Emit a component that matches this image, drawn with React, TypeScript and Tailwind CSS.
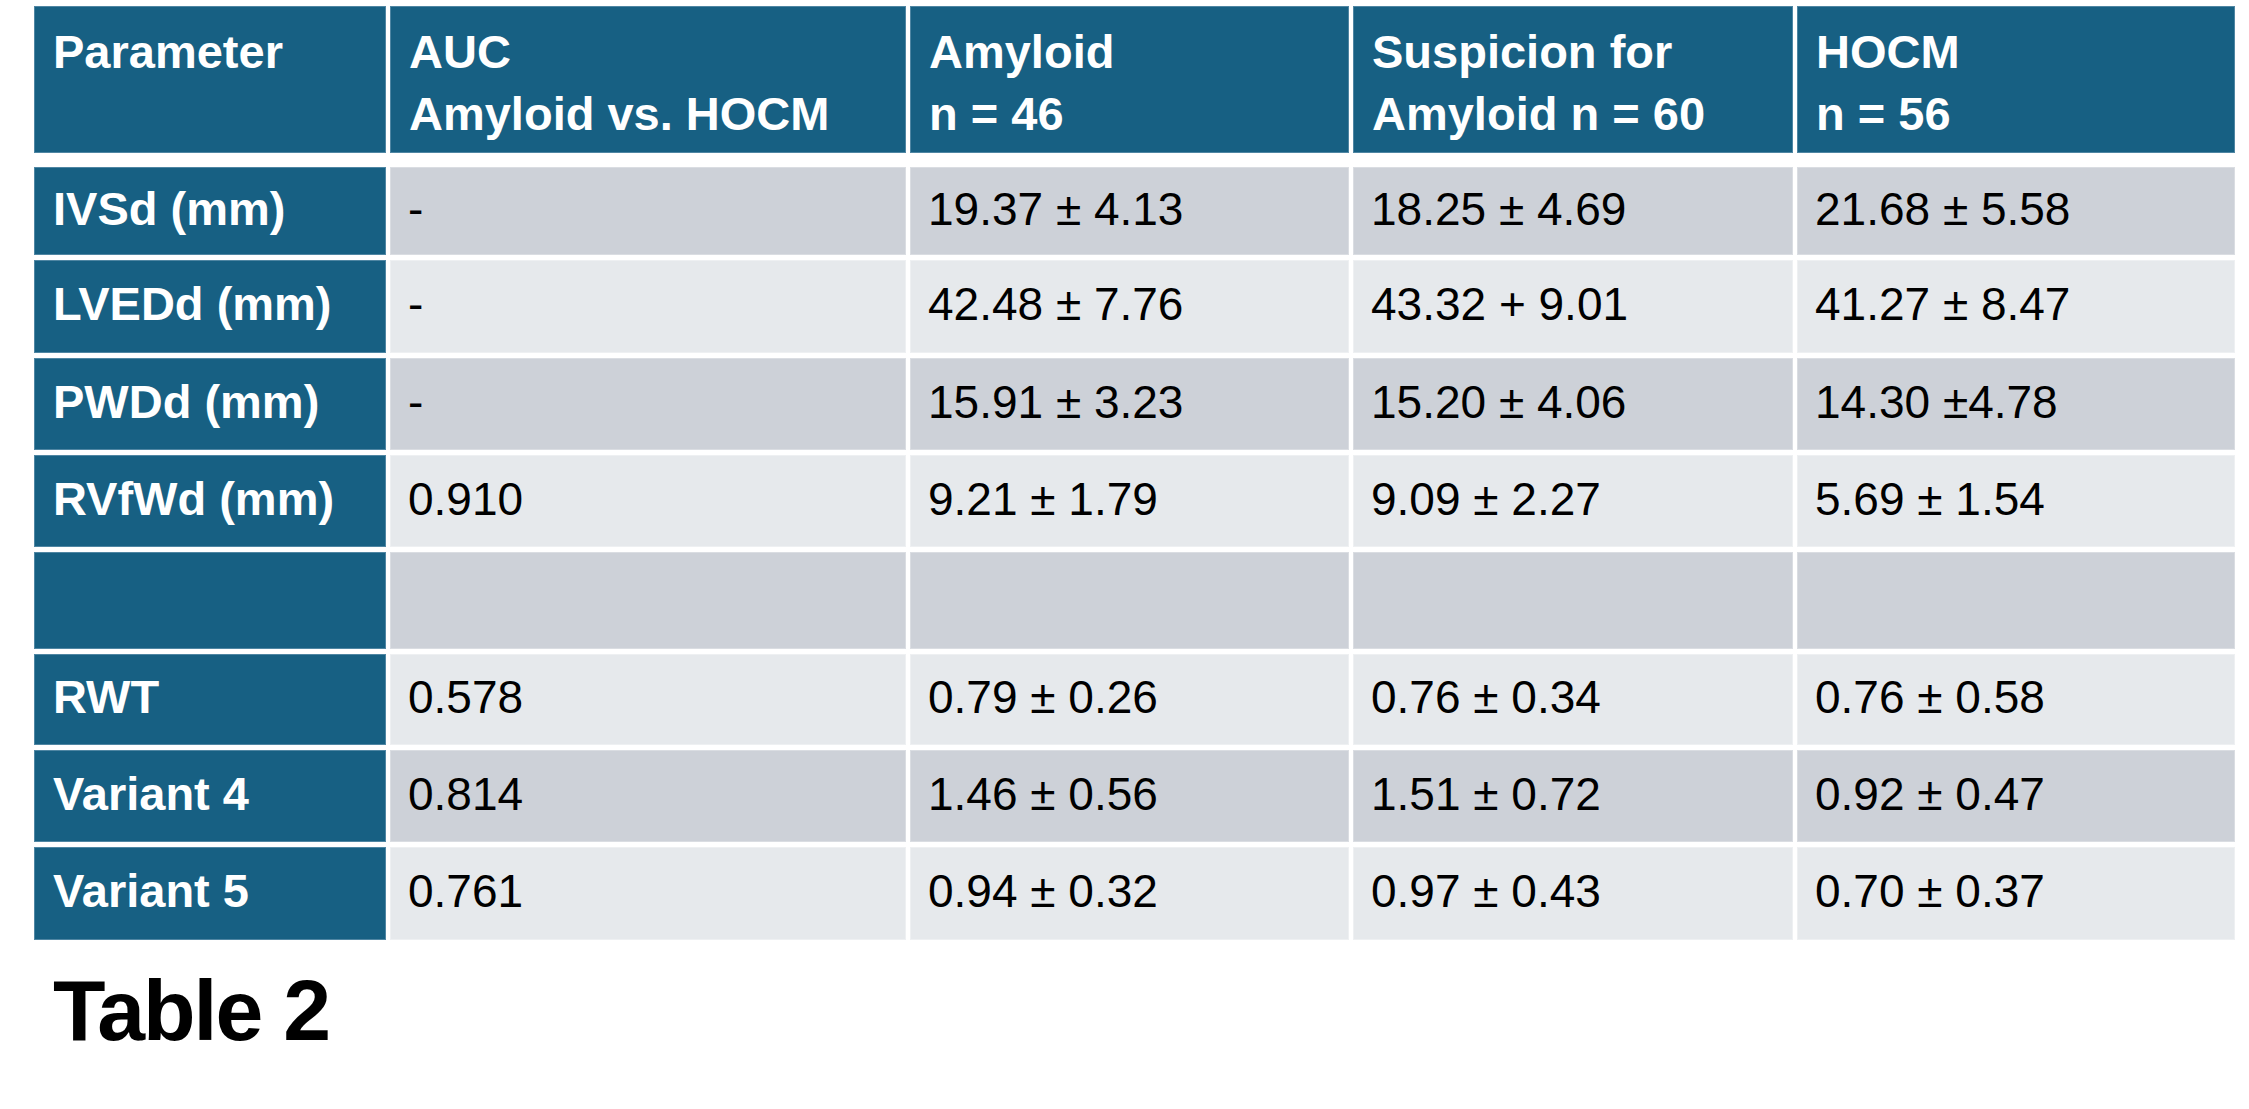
import React from 'react';

const headers = [
    ['Parameter'],
    ['AUC', 'Amyloid vs. HOCM'],
    ['Amyloid', 'n = 46'],
    ['Suspicion for', 'Amyloid n = 60'],
    ['HOCM', 'n = 56'],
];

// label, values, row height, dark band
const rows: { label: string; values: string[]; h: string; dark: boolean }[] = [
    { label: 'IVSd (mm)', values: ['-', '19.37 ± 4.13', '18.25 ± 4.69', '21.68 ± 5.58'], h: 'h-[88px]', dark: true },
    { label: 'LVEDd (mm)', values: ['-', '42.48 ± 7.76', '43.32 + 9.01', '41.27 ± 8.47'], h: 'h-[93px]', dark: false },
    { label: 'PWDd (mm)', values: ['-', '15.91 ± 3.23', '15.20 ± 4.06', '14.30 ±4.78'], h: 'h-[92px]', dark: true },
    { label: 'RVfWd (mm)', values: ['0.910', '9.21 ± 1.79', '9.09 ± 2.27', '5.69 ± 1.54'], h: 'h-[92px]', dark: false },
    { label: '', values: ['', '', '', ''], h: 'h-[97px]', dark: true },
    { label: 'RWT', values: ['0.578', '0.79 ± 0.26', '0.76 ± 0.34', '0.76 ± 0.58'], h: 'h-[91px]', dark: false },
    { label: 'Variant 4', values: ['0.814', '1.46 ± 0.56', '1.51 ± 0.72', '0.92 ± 0.47'], h: 'h-[92px]', dark: true },
    { label: 'Variant 5', values: ['0.761', '0.94 ± 0.32', '0.97 ± 0.43', '0.70 ± 0.37'], h: 'h-[93px]', dark: false },
];

const cols = 'grid grid-cols-[352px_516px_439px_440px_438px] gap-x-[4px]';

export default function App() {
    return (
        <div className="w-[2249px] h-[1109px] bg-white pl-[34px] pt-[6px] font-['Liberation_Sans',Arial,sans-serif] text-[46px] overflow-hidden">
            {/* header */}
            <div className={`${cols} h-[147px]`}>
                {headers.map((lines, i) => (
                    <div key={i} className="bg-[#176083] border border-[#4f86a3] px-[18px] pt-[14px] font-bold text-white text-[47px] leading-[62px]">
                        {lines.map((l) => (
                            <div key={l} className="whitespace-nowrap">{l}</div>
                        ))}
                    </div>
                ))}
            </div>

            {/* body */}
            <div className="mt-[14px] flex flex-col gap-y-[5px]">
                {rows.map((r, i) => (
                    <div key={i} className={`${cols} ${r.h}`}>
                        <div className="bg-[#176083] border border-[#4f86a3] px-[18px] pb-[4px] flex items-center font-bold text-white text-[47px] whitespace-nowrap">
                            {r.label}
                        </div>
                        {r.values.map((v, j) => (
                            <div
                                key={j}
                                className={`${r.dark ? 'bg-[#cdd1d8] border-[#dadde2]' : 'bg-[#e6e9ec] border-[#eef0f2]'} border px-[17px] pb-[4px] flex items-center text-black whitespace-nowrap`}
                            >
                                {v}
                            </div>
                        ))}
                    </div>
                ))}
            </div>

            <div className="mt-[27px] pl-[19px] text-[86px] font-bold leading-none tracking-[-2px] text-black">Table 2</div>
        </div>
    );
}
